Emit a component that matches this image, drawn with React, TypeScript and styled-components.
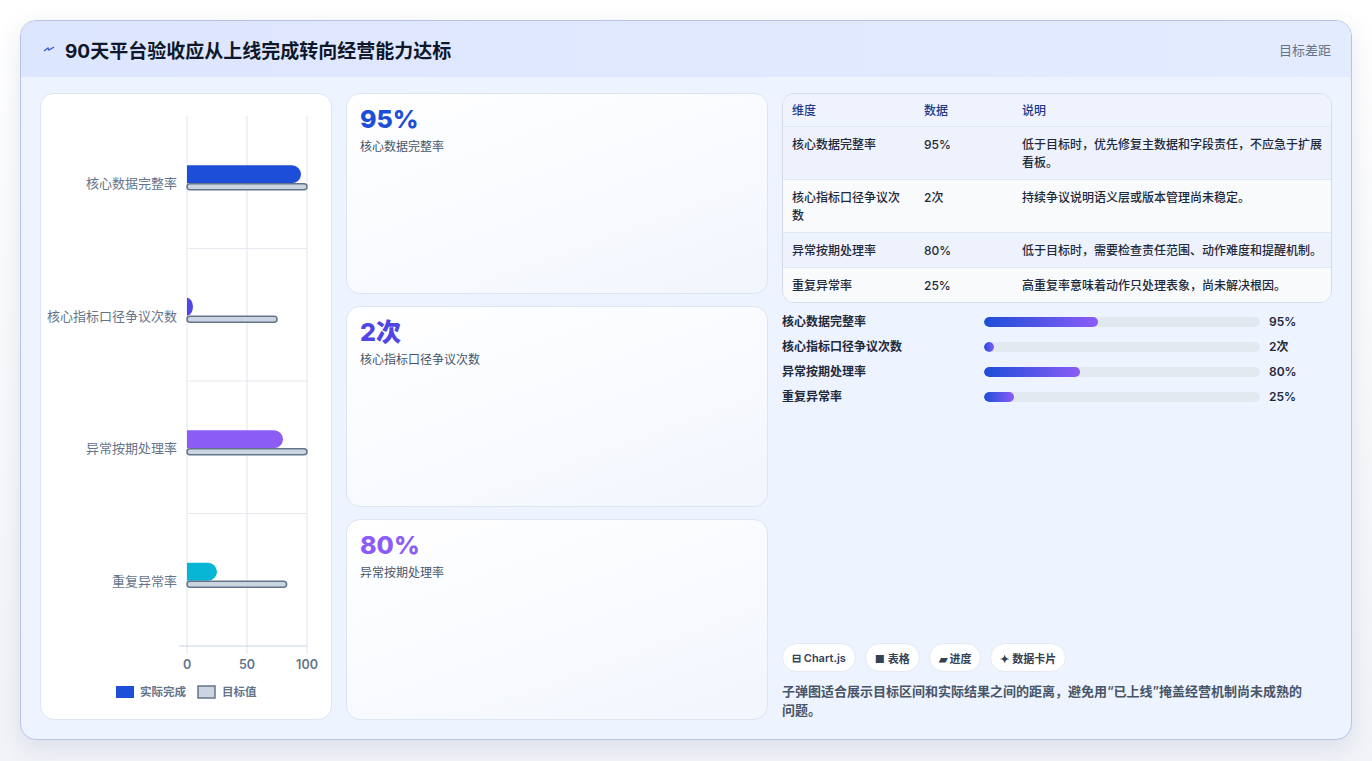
import React from "react";
import styled, { createGlobalStyle } from "styled-components";

const Global = createGlobalStyle`
  html, body { margin: 0; padding: 0; background: #f3f4f6; }
  body { font-family: Inter, "Noto Sans CJK SC", sans-serif; }
  * { box-sizing: border-box; }
`;

const Page = styled.div`
  width: 1372px; height: 761px; padding: 20px 20px 21px 20px;
  background: linear-gradient(#ffffff, #f1f3f7);
`;
const Frame = styled.div`
  height: 720px; border: 1px solid #b7c4e6; border-radius: 16px; overflow: hidden;
  background: #eef4ff; display: flex; flex-direction: column;
  box-shadow: 0 8px 24px rgba(60, 80, 140, 0.12);
`;
const Header = styled.div`
  height: 56px; flex: none; display: flex; align-items: center; justify-content: space-between;
  padding: 0 20px 0 22px; background: linear-gradient(90deg, #dde6ff, #e3ebff);
`;
const Title = styled.h1`
  margin: 0; font-size: 19px; font-weight: 700; color: #0f172a; display: flex; align-items: center; gap: 10px;
`;
const HeaderNote = styled.span`font-size: 13px; color: #64748b;`;
const Body = styled.div`
  flex: 1; display: grid; grid-template-columns: 292px 422px 550px; gap: 14px;
  padding: 16px 18px 19px 19px; min-height: 0;
`;
const ChartCard = styled.div`
  background: #fff; border: 1px solid #dde5f1; border-radius: 14px; overflow: hidden; position: relative;
`;
const KpiCol = styled.div`display: grid; grid-template-rows: 1fr 1fr 1fr; gap: 12px;`;
const Kpi = styled.div`
  border: 1px solid #dde5f1; border-radius: 14px; padding: 11px 13px;
  background: linear-gradient(160deg, #ffffff, #f2f6fd);
`;
const KpiValue = styled.div<{ $c: string }>`font-size: 25px; font-weight: 800; color: ${p => p.$c}; line-height: 28px;`;
const KpiLabel = styled.div`font-size: 12px; color: #475569; margin-top: 4px;`;
const Right = styled.div`display: flex; flex-direction: column;`;
const Table = styled.div`
  border: 1px solid #d3dcea; border-radius: 12px; overflow: hidden; background: #f8fafc;
`;
const Row = styled.div<{ $bg: string; $h: number; $head?: boolean }>`
  display: grid; grid-template-columns: 132px 98px 1fr; min-height: ${p => p.$h}px;
  padding: ${p => (p.$head ? "8px" : "9px")} 9px 0 9px; background: ${p => p.$bg};
  border-bottom: 1px solid #e2e8f0; font-size: 12px; line-height: 18px; font-weight: 500;
  color: ${p => (p.$head ? "#1e3a8a" : "#1e293b")};
  &:last-child { border-bottom: none; }
  & > span:first-child { padding-right: 20px; }
`;
const Bars = styled.div`display: flex; flex-direction: column; gap: 7px; margin-top: 10px;`;
const BarRow = styled.div`
  display: grid; grid-template-columns: 193px 276px 1fr; align-items: center; column-gap: 9px;
  font-size: 12px; font-weight: 600; color: #1e293b; height: 18px; line-height: 18px;
`;
const Track = styled.div`height: 10px; border-radius: 5px; background: #e2e8f0; overflow: hidden;`;
const Fill = styled.div`height: 100%; border-radius: 5px; background: linear-gradient(90deg, #1d4ed8, #8b5cf6);`;
const Spacer = styled.div`flex: 1;`;
const Tags = styled.div`display: flex; gap: 9px;`;
const Tag = styled.span`
  height: 29px; padding: 0 9px; border-radius: 15px; background: #fff; border: 1px solid #e4e9f2;
  font-size: 11px; font-weight: 600; color: #334155; display: flex; align-items: center; gap: 4px;
`;
const Note = styled.p`margin: 10px 0 0; font-size: 13px; line-height: 19px; font-weight: 600; color: #475569; padding-right: 20px;`;

const cats = [
  { l: "核心数据完整率", v: 95, t: 100, c: "#1d4ed8" },
  { l: "核心指标口径争议次数", v: 5, t: 75, c: "#4f46e5" },
  { l: "异常按期处理率", v: 80, t: 100, c: "#8b5cf6" },
  { l: "重复异常率", v: 25, t: 83, c: "#06b6d4" },
];

function Chart() {
  const x0 = 146, sc = 1.2, top = 22, band = 132.5;
  return (
    <svg width="292" height="628" style={{ display: "block" }}>
      {[0, 50, 100].map(v => (
        <line key={v} x1={x0 + v * sc} x2={x0 + v * sc} y1={top} y2={top + band * 4 + 8} stroke="#dfe5ee" />
      ))}
      {[1, 2, 3].map(i => (
        <line key={i} x1={x0} x2={x0 + 120} y1={top + band * i} y2={top + band * i} stroke="#e5e9f0" />
      ))}
      <line x1={x0 - 8} x2={x0 + 120} y1={top + band * 4} y2={top + band * 4} stroke="#cbd5e1" />
      {cats.map((c, i) => {
        const cy = top + band * i + band / 2;
        const w = c.v * sc;
        const r = Math.min(9, w);
        return (
          <g key={i}>
            <text x={x0 - 10} y={cy + 6} textAnchor="end" fontSize="13" fill="#64748b" fontFamily="Inter, 'Noto Sans CJK SC', sans-serif">{c.l}</text>
            <path d={`M${x0} ${cy - 17} H${x0 + w - r} A${r} 9 0 0 1 ${x0 + w} ${cy - 8} A${r} 9 0 0 1 ${x0 + w - r} ${cy + 1} H${x0} Z`} fill={c.c} />
            <rect x={x0} y={cy + 1.5} width={c.t * sc} height={6} rx={3} fill="#cbd5e1" stroke="#64748b" strokeWidth="1.5" />
          </g>
        );
      })}
      {[0, 50, 100].map(v => (
        <text key={v} x={x0 + v * sc} y={575} textAnchor="middle" fontSize="12.5" fontWeight="600" fill="#64748b" fontFamily="Inter, sans-serif">{v}</text>
      ))}
      <rect x={75} y={592} width={18} height={12} fill="#1d4ed8" />
      <text x={99} y={602} fontSize="11.5" fontWeight="600" fill="#64748b" fontFamily="Inter, 'Noto Sans CJK SC', sans-serif">实际完成</text>
      <rect x={157} y={592} width={17} height={12} fill="#cbd5e1" stroke="#64748b" strokeWidth="1.5" />
      <text x={181} y={602} fontSize="11.5" fontWeight="600" fill="#64748b" fontFamily="Inter, 'Noto Sans CJK SC', sans-serif">目标值</text>
    </svg>
  );
}

export default function App() {
  const rows = [
    ["核心数据完整率", "95%", "低于目标时，优先修复主数据和字段责任，不应急于扩展看板。", 53, "#eef2fd"],
    ["核心指标口径争议次数", "2次", "持续争议说明语义层或版本管理尚未稳定。", 53, "#f8fafc"],
    ["异常按期处理率", "80%", "低于目标时，需要检查责任范围、动作难度和提醒机制。", 35, "#eef2fd"],
    ["重复异常率", "25%", "高重复率意味着动作只处理表象，尚未解决根因。", 34, "#f8fafc"],
  ] as const;
  const bars = [["核心数据完整率", 114, "95%"], ["核心指标口径争议次数", 10, "2次"], ["异常按期处理率", 96, "80%"], ["重复异常率", 30, "25%"]] as const;
  return (
    <Page>
      <Global />
      <Frame>
        <Header>
          <Title>
            <svg width="12" height="8" viewBox="0 0 12 8"><path d="M1 6 L5 3 L6 5 L11 2" stroke="#3b5bdb" strokeWidth="1.4" fill="none" /></svg>
            90天平台验收应从上线完成转向经营能力达标
          </Title>
          <HeaderNote>目标差距</HeaderNote>
        </Header>
        <Body>
          <ChartCard><Chart /></ChartCard>
          <KpiCol>
            <Kpi><KpiValue $c="#1d4ed8">95%</KpiValue><KpiLabel>核心数据完整率</KpiLabel></Kpi>
            <Kpi><KpiValue $c="#4f46e5">2次</KpiValue><KpiLabel>核心指标口径争议次数</KpiLabel></Kpi>
            <Kpi><KpiValue $c="#8b5cf6">80%</KpiValue><KpiLabel>异常按期处理率</KpiLabel></Kpi>
          </KpiCol>
          <Right>
            <Table>
              <Row $head $bg="#eef3fd" $h={33}><span>维度</span><span>数据</span><span>说明</span></Row>
              {rows.map(r => (
                <Row key={r[0]} $bg={r[4]} $h={r[3]}><span>{r[0]}</span><span>{r[1]}</span><span>{r[2]}</span></Row>
              ))}
            </Table>
            <Bars>
              {bars.map(b => (
                <BarRow key={b[0]}>
                  <span>{b[0]}</span>
                  <Track><Fill style={{ width: b[1] }} /></Track>
                  <span>{b[2]}</span>
                </BarRow>
              ))}
            </Bars>
            <Spacer />
            <Tags>
              <Tag>⊟ Chart.js</Tag><Tag>■ 表格</Tag><Tag>▰ 进度</Tag><Tag>✦ 数据卡片</Tag>
            </Tags>
            <Note>子弹图适合展示目标区间和实际结果之间的距离，避免用“已上线”掩盖经营机制尚未成熟的问题。</Note>
          </Right>
        </Body>
      </Frame>
    </Page>
  );
}
